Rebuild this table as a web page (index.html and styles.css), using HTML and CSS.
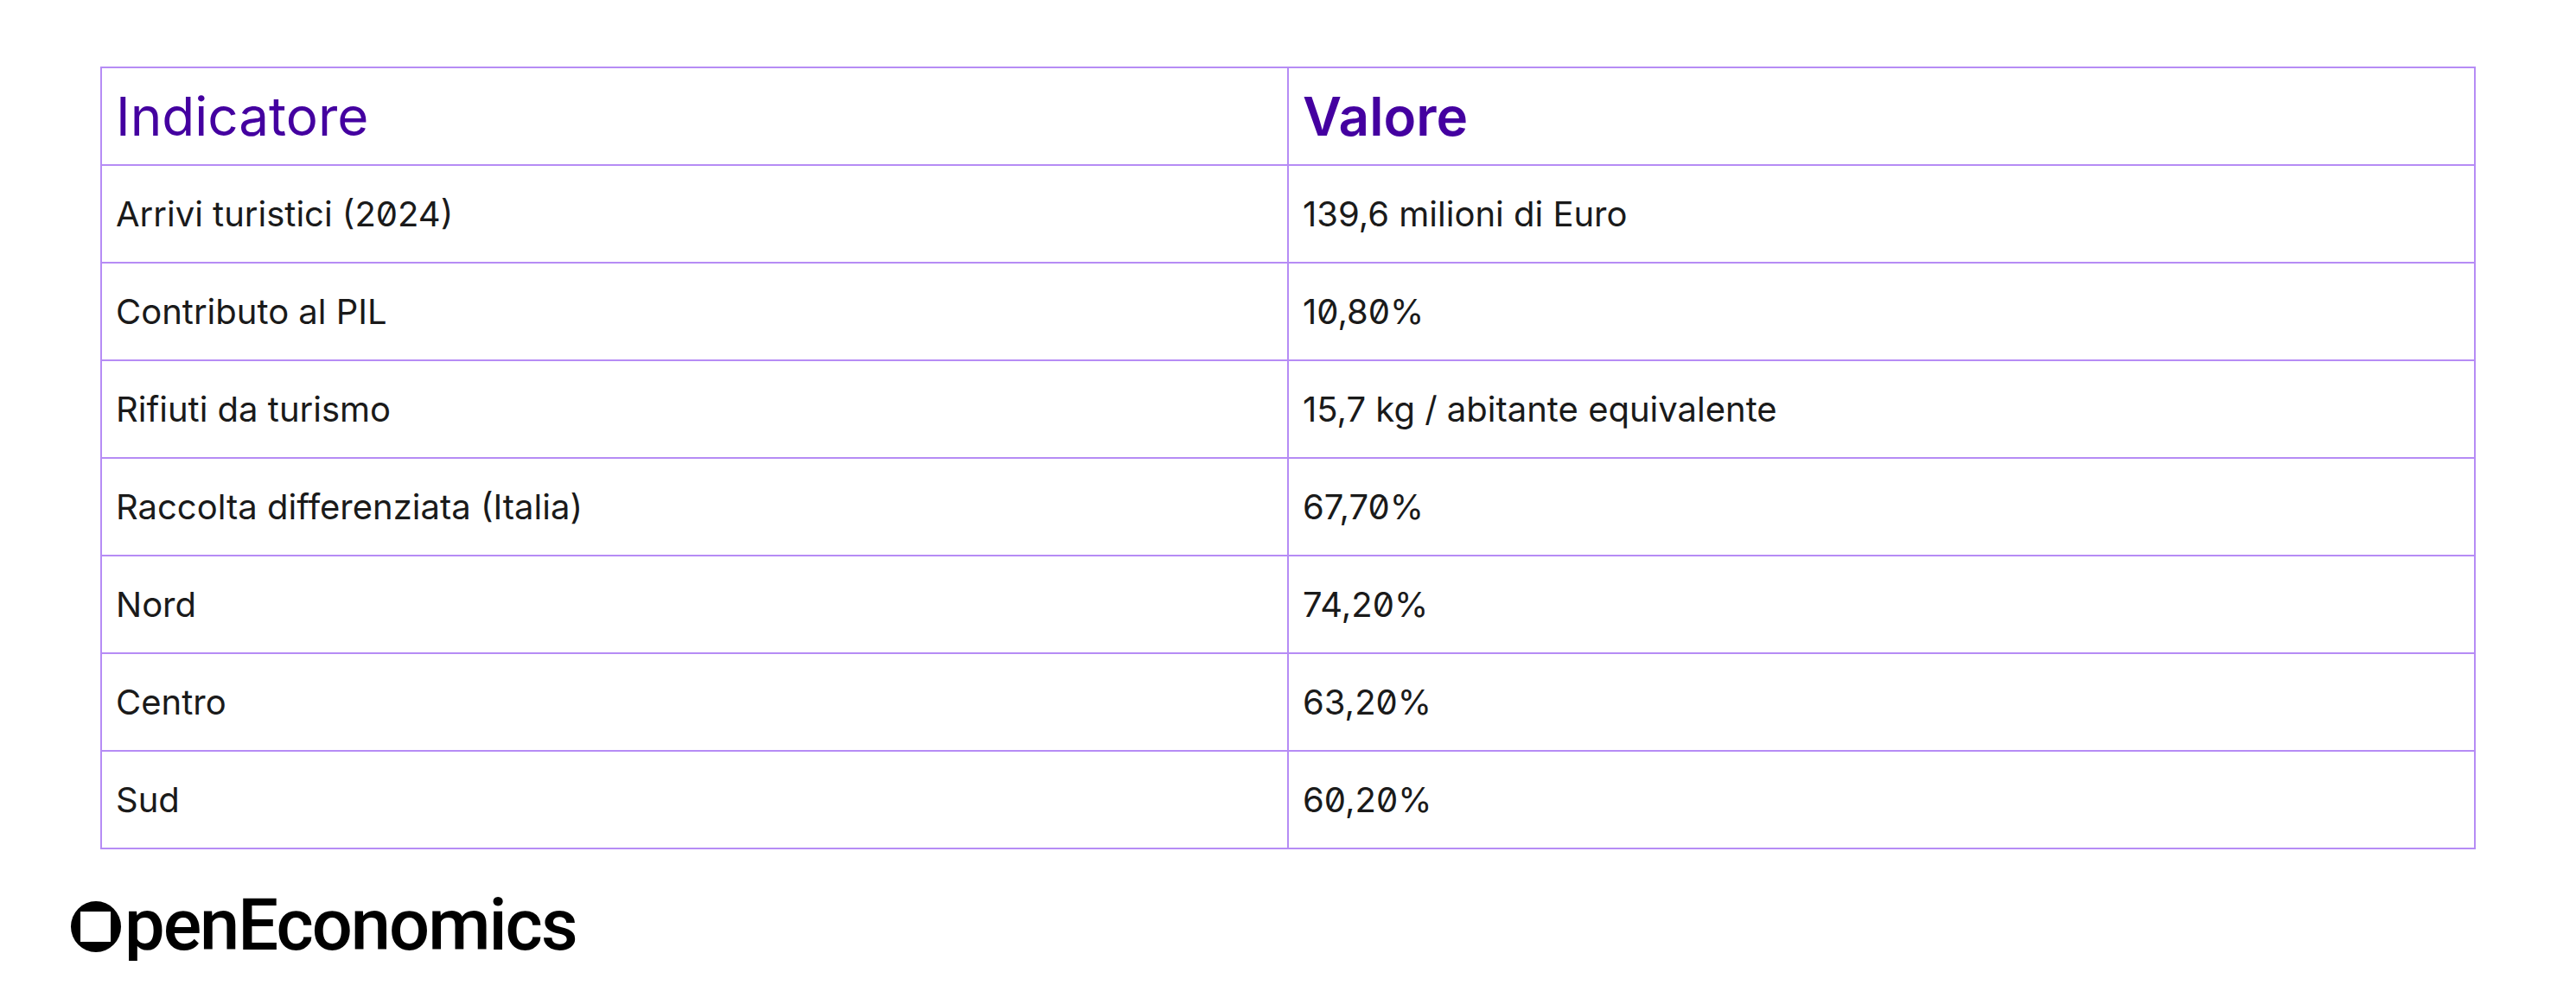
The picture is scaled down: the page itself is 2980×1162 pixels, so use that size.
FILE: index.html
```html
<!DOCTYPE html>
<html lang="it">
<head>
<meta charset="utf-8">
<title>Turismo e rifiuti</title>
<link rel="stylesheet" href="styles.css">
</head>
<body>
<main class="page">
  <table class="data">
    <thead>
      <tr>
        <th class="h-ind">Indicatore</th>
        <th class="h-val">Valore</th>
      </tr>
    </thead>
    <tbody>
      <tr><td>Arrivi turistici (2024)</td><td>139,6 milioni di Euro</td></tr>
      <tr><td>Contributo al PIL</td><td>10,80%</td></tr>
      <tr><td>Rifiuti da turismo</td><td>15,7 kg / abitante equivalente</td></tr>
      <tr><td>Raccolta differenziata (Italia)</td><td>67,70%</td></tr>
      <tr><td>Nord</td><td>74,20%</td></tr>
      <tr><td>Centro</td><td>63,20%</td></tr>
      <tr><td>Sud</td><td>60,20%</td></tr>
    </tbody>
  </table>
  <footer class="brand">
    <span class="logo"><span class="logo-o">O</span>penEconomics</span>
  </footer>
</main>
</body>
</html>
```
FILE: styles.css
```css
html, body {
  margin: 0;
  padding: 0;
  background: #ffffff;
}
.page {
  padding: 77px 0 0 116px;
}
.data {
  border-collapse: collapse;
  width: 2748px;
  table-layout: fixed;
  font-family: Inter, "Noto Sans", sans-serif;
  font-feature-settings: "zero" 1;
}
.data th,
.data td {
  border: 2px solid #b68cf5;
  height: 113px;
  padding: 0 16px;
  text-align: left;
  vertical-align: middle;
  box-sizing: border-box;
}
.data th {
  font-size: 62px;
  color: #4400a0;
  font-weight: 400;
}
.data th.h-val {
  font-weight: 600;
}
.data td {
  font-size: 40px;
  color: #1a1a1a;
}
.brand {
  padding-top: 46px;
  margin-left: -34px;
}
.logo {
  font-family: Roboto, "Liberation Sans", sans-serif;
  font-weight: 500;
  font-size: 83px;
  letter-spacing: -2px;
  color: #000;
  line-height: 1;
}
.logo-o {
  display: inline-block;
  position: relative;
  color: transparent;
  width: 58px;
  margin-right: 4px;
}
.logo-o::before {
  content: "";
  position: absolute;
  left: 0;
  right: 0;
  top: 0.17em;
  height: 59px;
  background: #000;
  border-radius: 50%;
}
.logo-o::after {
  content: "";
  position: absolute;
  left: 11px;
  top: calc(0.17em + 12px);
  width: 35px;
  height: 35px;
  background: #fff;
}
```
